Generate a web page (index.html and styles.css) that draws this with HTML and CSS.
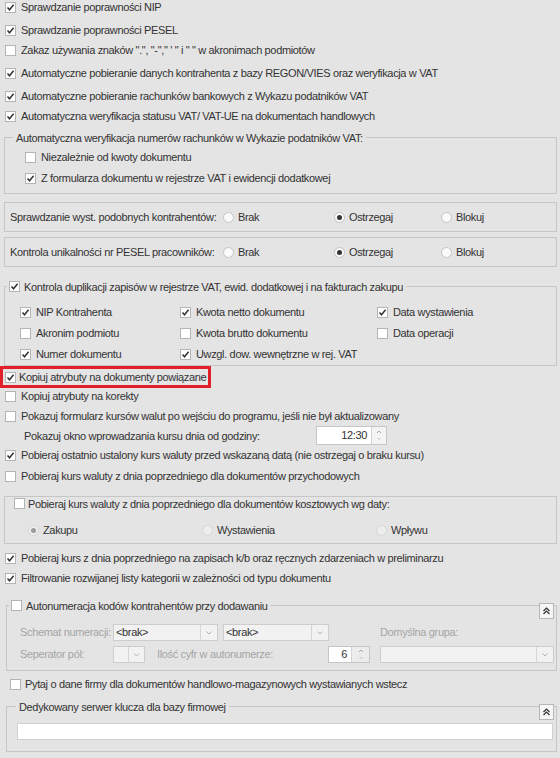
FILE: index.html
```html
<!DOCTYPE html>
<html lang="pl">
<head>
    <meta charset="UTF-8">
    <title>Parametry - Ogólne</title>
    <link rel="stylesheet" href="styles.css">
</head>
<body>
<div class="page">

    <div class="row first"><span class="cb on"></span>Sprawdzanie poprawności NIP</div>
    <div class="row mt6"><span class="cb on"></span>Sprawdzanie poprawności PESEL</div>
    <div class="row"><span class="cb"></span>Zakaz używania znaków ".", "-"," ' " i " " w akronimach podmiotów</div>
    <div class="row mt3"><span class="cb on"></span>Automatyczne pobieranie danych kontrahenta z bazy REGON/VIES oraz weryfikacja w VAT</div>
    <div class="row mt3"><span class="cb on"></span>Automatyczne pobieranie rachunków bankowych z Wykazu podatników VAT</div>
    <div class="row"><span class="cb on"></span>Automatyczna weryfikacja statusu VAT/ VAT-UE na dokumentach handlowych</div>

    <fieldset class="group g-accounts">
        <legend>Automatyczna weryfikacja numerów rachunków w Wykazie podatników VAT:</legend>
        <div class="group-body">
            <div class="row"><span class="cb"></span>Niezależnie od kwoty dokumentu</div>
            <div class="row mt1"><span class="cb on"></span>Z formularza dokumentu w rejestrze VAT i ewidencji dodatkowej</div>
        </div>
    </fieldset>

    <div class="box box-similar">
        <span class="box-label">Sprawdzanie wyst. podobnych kontrahentów:</span>
        <span class="opt w111"><span class="rd"></span>Brak</span>
        <span class="opt w107"><span class="rd on"></span>Ostrzegaj</span>
        <span class="opt"><span class="rd"></span>Blokuj</span>
    </div>

    <div class="box box-pesel">
        <span class="box-label">Kontrola unikalności nr PESEL pracowników:</span>
        <span class="opt w111"><span class="rd"></span>Brak</span>
        <span class="opt w107"><span class="rd on"></span>Ostrzegaj</span>
        <span class="opt"><span class="rd"></span>Blokuj</span>
    </div>

    <fieldset class="group g-dup">
        <legend><span class="cb on"></span>Kontrola duplikacji zapisów w rejestrze VAT, ewid. dodatkowej i na fakturach zakupu</legend>
        <div class="dup-grid">
            <div class="row"><span class="cb on"></span>NIP Kontrahenta</div>
            <div class="row"><span class="cb on"></span>Kwota netto dokumentu</div>
            <div class="row"><span class="cb on"></span>Data wystawienia</div>
            <div class="row"><span class="cb"></span>Akronim podmiotu</div>
            <div class="row"><span class="cb"></span>Kwota brutto dokumentu</div>
            <div class="row"><span class="cb"></span>Data operacji</div>
            <div class="row"><span class="cb on"></span>Numer dokumentu</div>
            <div class="row"><span class="cb on"></span>Uwzgl. dow. wewnętrzne w rej. VAT</div>
        </div>
    </fieldset>

    <div class="row marked"><span class="cb on"></span>Kopiuj atrybuty na dokumenty powiązane</div>
    <div class="row short"><span class="cb"></span>Kopiuj atrybuty na korekty</div>
    <div class="row mt2"><span class="cb"></span>Pokazuj formularz kursów walut po wejściu do programu, jeśli nie był aktualizowany</div>
    <div class="row hour">
        <span class="hour-label">Pokazuj okno wprowadzania kursu dnia od godziny:</span>
        <span class="spin spin-hour"><span class="spin-val">12:30</span><span class="spin-btn"></span></span>
    </div>
    <div class="row"><span class="cb on"></span>Pobieraj ostatnio ustalony kurs waluty przed wskazaną datą (nie ostrzegaj o braku kursu)</div>
    <div class="row mt1"><span class="cb"></span>Pobieraj kurs waluty z dnia poprzedniego dla dokumentów przychodowych</div>

    <div class="box box-cost">
        <div class="row cost-head"><span class="cb"></span>Pobieraj kurs waluty z dnia poprzedniego dla dokumentów kosztowych wg daty:</div>
        <div class="row cost-opts">
            <span class="opt w174 off"><span class="rd on"></span>Zakupu</span>
            <span class="opt w174 off"><span class="rd"></span>Wystawienia</span>
            <span class="opt off"><span class="rd"></span>Wpływu</span>
        </div>
    </div>

    <div class="row mt4"><span class="cb on"></span>Pobieraj kurs z dnia poprzedniego na zapisach k/b oraz ręcznych zdarzeniach w preliminarzu</div>
    <div class="row"><span class="cb on"></span>Filtrowanie rozwijanej listy kategorii w zależności od typu dokumentu</div>

    <fieldset class="group g-auto">
        <legend><span class="cb"></span>Autonumeracja kodów kontrahentów przy dodawaniu</legend>
        <button class="collapse" type="button"></button>
        <div class="auto-body">
            <div class="row">
                <span class="dim lbl93">Schemat numeracji:</span>
                <span class="combo w105"><span class="combo-val">&lt;brak&gt;</span><span class="combo-btn"></span></span>
                <span class="combo w106 ml5"><span class="combo-val">&lt;brak&gt;</span><span class="combo-btn"></span></span>
                <span class="dim ml51">Domyślna grupa:</span>
            </div>
            <div class="row mt2">
                <span class="dim lbl93">Seperator pól:</span>
                <span class="combo w32"><span class="combo-val"></span><span class="combo-btn"></span></span>
                <span class="dim lbl171">Ilość cyfr w autonumerze:</span>
                <span class="spin spin-digits"><span class="spin-val">6</span><span class="spin-btn"></span></span>
                <span class="combo w174 ml10"><span class="combo-val"></span><span class="combo-btn"></span></span>
            </div>
        </div>
    </fieldset>

    <div class="row ask"><span class="cb"></span>Pytaj o dane firmy dla dokumentów handlowo-magazynowych wystawianych wstecz</div>

    <fieldset class="group g-key">
        <legend>Dedykowany serwer klucza dla bazy firmowej</legend>
        <button class="collapse" type="button"></button>
        <div class="key-body">
            <input class="key-input" type="text">
        </div>
    </fieldset>

</div>
</body>
</html>
```

FILE: styles.css
```css
body {
    margin: 0;
    background: #e4e4e4;
    color: #333;
    font-family: "Liberation Sans", Arial, sans-serif;
    font-size: 11px;
    letter-spacing: -0.35px;
}

.page {
    width: 560px;
    height: 758px;
    overflow: hidden;
    white-space: nowrap;
}

/* plain option rows */
.row {
    display: flex;
    align-items: center;
    height: 20px;
    padding-left: 5px;
}

.row.first { height: 14px; }
.mt1 { margin-top: 1px; }
.mt2 { margin-top: 2px; }
.mt3 { margin-top: 3px; }
.mt4 { margin-top: 4px; }
.mt6 { margin-top: 6px; }

/* checkbox */
.cb {
    box-sizing: border-box;
    width: 11px;
    height: 11px;
    margin-right: 5px;
    flex-shrink: 0;
    background: #fff;
    border: 1px solid #b4b4b4;
}

.cb.on {
    background: #fff url("data:image/svg+xml,%3Csvg xmlns='http://www.w3.org/2000/svg' width='9' height='9'%3E%3Cpolyline points='1.5,4.5 3.5,6.8 7.6,1.8' fill='none' stroke='%23333' stroke-width='1.5'/%3E%3C/svg%3E") center no-repeat;
}

/* radio */
.rd {
    box-sizing: border-box;
    width: 11px;
    height: 11px;
    margin-right: 4px;
    flex-shrink: 0;
    border-radius: 50%;
    background: #fafafa;
    border: 1px solid #c4c4c4;
    position: relative;
}

.rd.on::after {
    content: "";
    position: absolute;
    left: 2px;
    top: 2px;
    width: 5px;
    height: 5px;
    border-radius: 50%;
    background: #333;
}

.opt {
    display: flex;
    align-items: center;
}

.opt.off .rd { background: #ededed; border-color: #d6d6d6; }
.opt.off .rd.on::after { background: #9a9a9a; }

.w107 { width: 107px; }
.w111 { width: 111px; }
.w174 { width: 174px; }

/* framed groups */
.group {
    margin: 0 3px 0 4px;
    padding: 0;
    min-width: 0;
    border: 1px solid #c6c6c6;
    position: relative;
}

.group legend {
    display: flex;
    align-items: center;
    height: 13px;
    padding: 0 3px;
}

.g-accounts { margin-top: 5px; }
.g-accounts legend { margin-left: 8px; }

.group-body { padding: 3px 0 5px 15px; }

.box {
    box-sizing: border-box;
    margin: 0 3px 0 4px;
    border: 1px solid #c6c6c6;
}

.box-similar, .box-pesel {
    display: flex;
    align-items: center;
    height: 30px;
    padding-left: 5px;
}

.box-similar { margin-top: 8px; }
.box-pesel { margin-top: 5px; }

.box-label { width: 213px; }

.g-dup { margin-top: 13px; }
.g-dup legend { margin-left: 2px; padding: 0 3px 0 2px; }
.g-dup legend .cb { margin-right: 4px; }

.dup-grid {
    display: grid;
    grid-template-columns: 160px 197px 1fr;
    row-gap: 1px;
    padding: 9px 0 1px 15px;
}

.dup-grid .row { padding-left: 0; }

.marked {
    box-sizing: border-box;
    width: 211px;
    height: 22px;
    padding-left: 2px;
    border: 3px solid #e3202a;
}

.marked .cb { margin-right: 3px; }

.short { height: 16px; }

.hour {
    height: 19px;
    padding-left: 24px;
}

.hour-label { width: 292px; }

/* spin edits */
.spin {
    box-sizing: border-box;
    display: flex;
    height: 19px;
    border: 1px solid #c6c6c6;
    background: #fff;
}

.spin-val {
    flex: 1;
    text-align: right;
    padding-right: 4px;
    line-height: 17px;
}

.spin-btn {
    width: 14px;
    border-left: 1px solid #d4d4d4;
    background: #f4f4f4 url("data:image/svg+xml,%3Csvg xmlns='http://www.w3.org/2000/svg' width='14' height='17'%3E%3Cpolyline points='5,6 7,4 9,6' fill='none' stroke='%23a8a8a8'/%3E%3Cpolyline points='5.5,11 7,12.5 8.5,11' fill='none' stroke='%23c4c4c4'/%3E%3C/svg%3E") center no-repeat;
}

.spin-hour { width: 71px; }
.spin-digits { width: 42px; height: 17px; }
.spin-digits .spin-val { line-height: 15px; }
.spin-digits .spin-btn { width: 17px; background-color: #ececec; }

.box-cost {
    margin-top: 10px;
    padding: 0 0 3px;
}

.cost-head { height: 13px; padding-left: 9px; margin-top: 0; }
.cost-head .cb { margin-right: 3px; }

.cost-opts {
    margin-top: 10px;
    padding-left: 23px;
}

/* numbering section */
.g-auto {
    margin: 11px 3px 0 6px;
}

.g-auto legend { margin-left: 2px; padding: 0 2px; }
.g-auto legend .cb { margin-right: 4px; }

.collapse {
    position: absolute;
    right: 2px;
    top: -9px;
    width: 15px;
    height: 16px;
    padding: 0;
    border: 1px solid #b6b6b6;
    background: #f6f6f6 url("data:image/svg+xml,%3Csvg xmlns='http://www.w3.org/2000/svg' width='13' height='14'%3E%3Cpolyline points='3.5,7 6.5,4 9.5,7' fill='none' stroke='%23333' stroke-width='1.2'/%3E%3Cpolyline points='3.5,10 6.5,7 9.5,10' fill='none' stroke='%23333' stroke-width='1.2'/%3E%3C/svg%3E") center no-repeat;
}

.auto-body { padding: 10px 0 6px 13px; }
.auto-body .row { padding-left: 0; }

.dim { color: #a4a4a4; }
.lbl93 { width: 93px; }
.lbl171 { width: 171px; margin-left: 12px; }
.ml5 { margin-left: 5px; }
.ml10 { margin-left: 10px; }
.ml51 { margin-left: 51px; }

.combo {
    box-sizing: border-box;
    display: flex;
    height: 17px;
    border: 1px solid #cdcdcd;
    background: #f2f2f2;
}

.combo-val {
    flex: 1;
    padding-left: 2px;
    line-height: 15px;
}

.combo-btn {
    width: 16px;
    border-left: 1px solid #d6d6d6;
    background: url("data:image/svg+xml,%3Csvg xmlns='http://www.w3.org/2000/svg' width='16' height='15'%3E%3Cpolyline points='5.5,6.5 8,9 10.5,6.5' fill='none' stroke='%23b0b0b0'/%3E%3C/svg%3E") center no-repeat;
}

.w32 { width: 32px; }
.w105 { width: 105px; }
.w106 { width: 106px; }
.combo.w32 .combo-btn { width: 15px; }

.ask {
    margin-top: 3px;
    padding-left: 10px;
}

.ask .cb { margin-right: 4px; }

/* license server */
.g-key { margin: 6px 3px 0 6px; }
.g-key legend { margin-left: 9px; }

.key-body { padding: 10px 3px 11px 10px; }

.key-input {
    box-sizing: border-box;
    display: block;
    width: 100%;
    height: 17px;
    margin: 0;
    border: 1px solid #d0d0d0;
    background: #fff;
}
```
